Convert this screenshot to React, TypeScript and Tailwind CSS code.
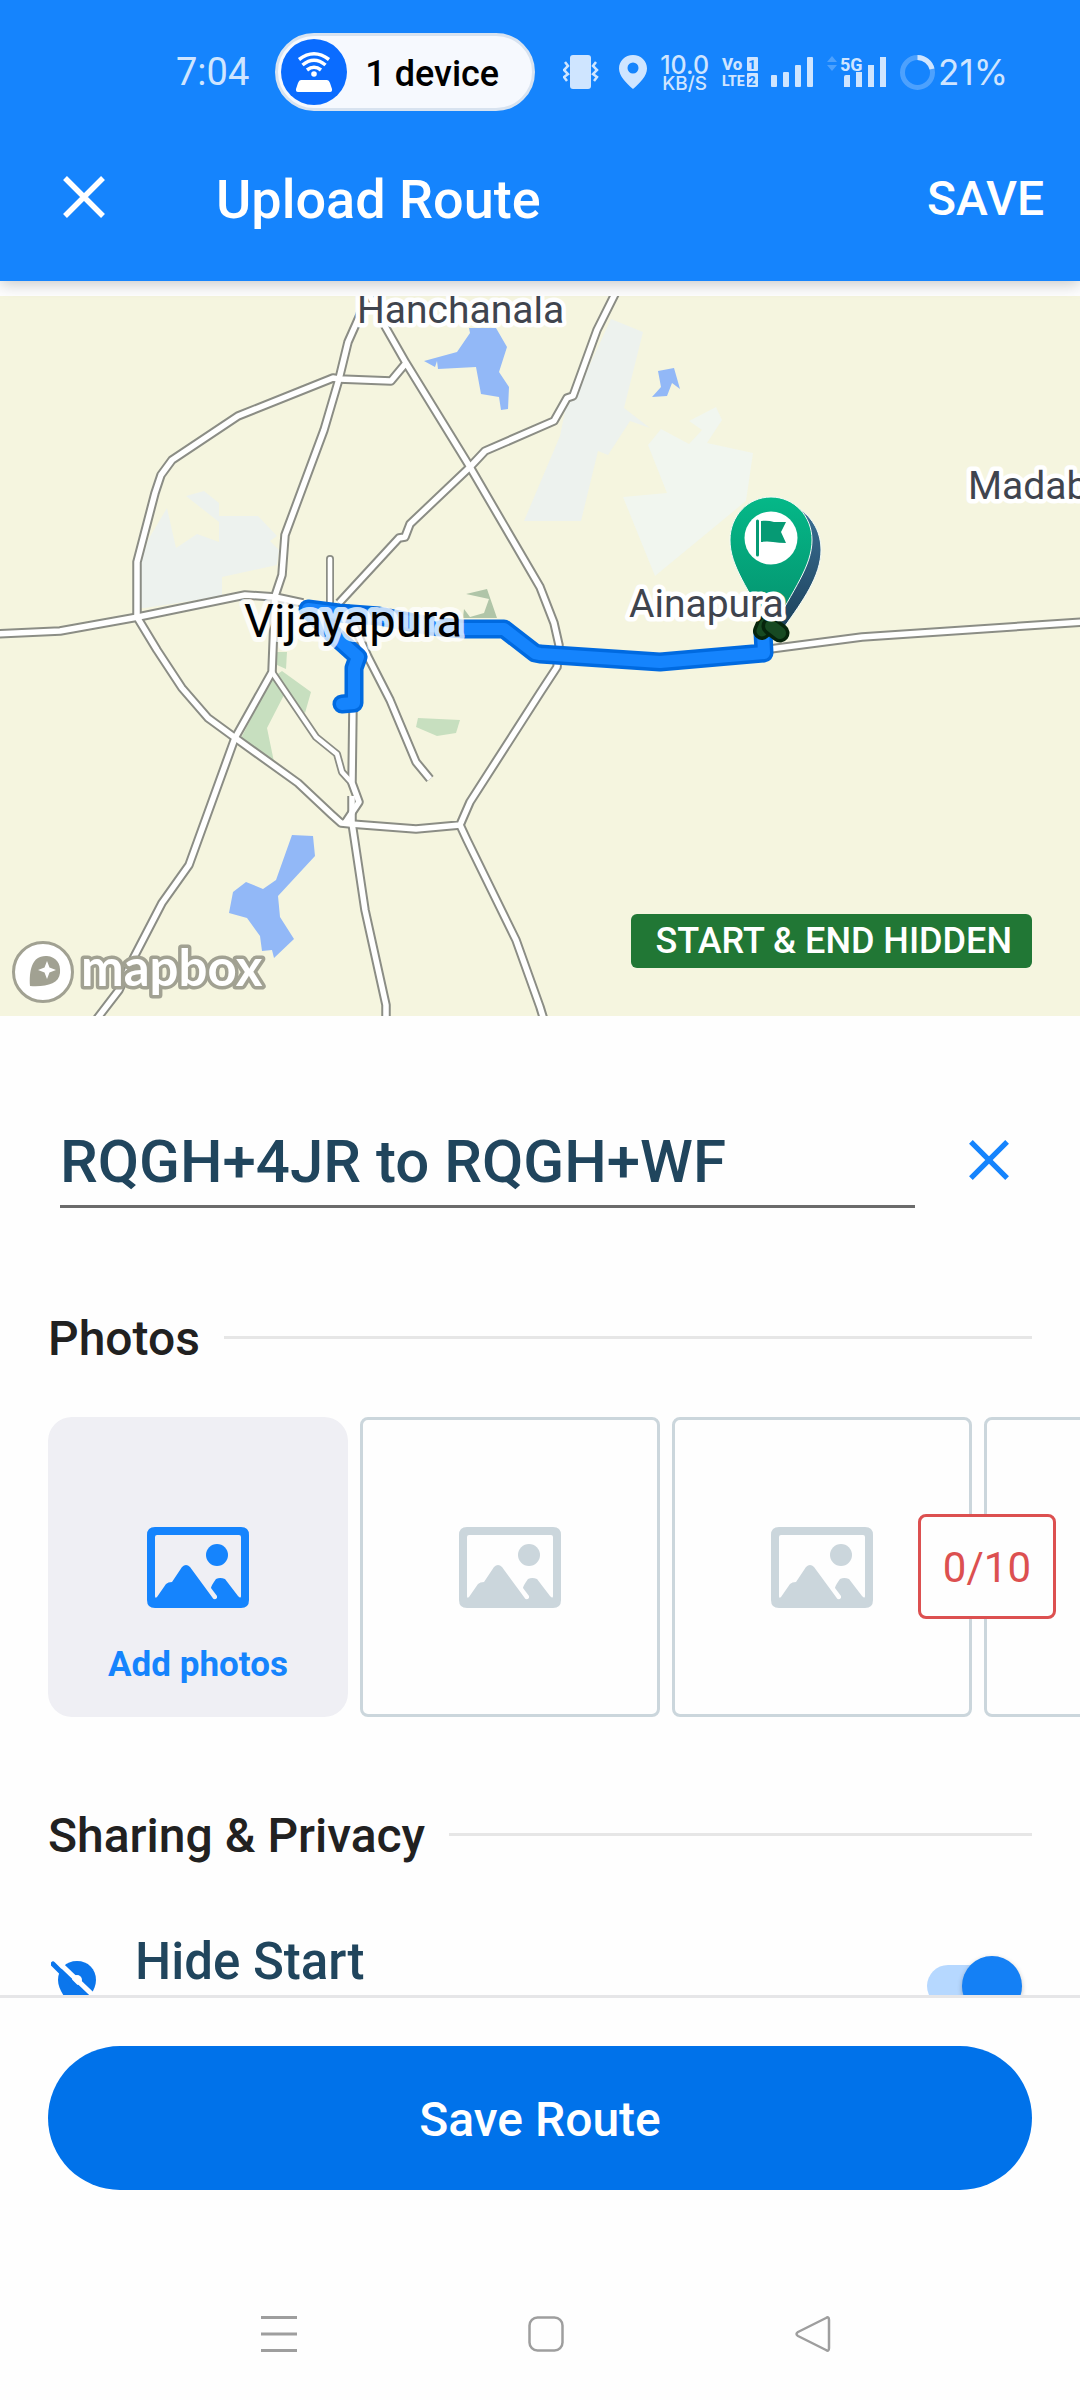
import React, { useState } from 'react';

const areas = [
  {
    color: '#edf2ee',
    points: [
      '139,271 148,244 167,212 176,252 197,238 219,246 219,226 186,200 204,195 219,207 219,220 258,220 277,240 270,245 279,254 277,269 222,281 222,300 145,312 139,312',
      '611,23 643,36 624,112 650,132 630,125 608,159 598,155 581,225 524,225 560,140 567,105 580,90',
    ],
  },
  {
    color: '#f1f6ef',
    points: [
      '716,111 722,124 707,147 753,157 746,205 655,280 623,201 667,197 648,149 661,133 689,148 702,134 689,125',
    ],
  },
  {
    color: '#92b8f7',
    points: [
      '658,75 674,72 680,93 672,87 667,100 652,101 661,91',
      '469,32 496,32 507,51 499,76 509,91 508,113 501,114 499,101 481,98 476,71 438,73 437,65 435,71 424,65 457,56 470,37',
      '292,539 313,540 315,560 278,600 280,621 294,643 274,662 272,654 262,655 260,640 247,622 229,617 233,596 246,586 263,593 276,584',
    ],
  },
  {
    color: '#b0c5a8',
    points: ['466,298 487,293 497,322 463,322 464,313 470,321 484,317 489,303'],
  },
  {
    color: '#c7dfbf',
    points: [
      '277,356 287,356 286,373 277,369',
      '282,375 311,396 305,417 284,399 267,432 274,466 241,442 272,382',
      '418,422 460,424 456,437 437,440 416,431',
    ],
  },
];

const minorRoads = [
  '330,263 330,306',
  '272,376 316,441 337,458 342,476 352,487',
];

const roads = [
  '406,67 391,85 339,83 333,82 238,120 172,164 161,179 155,197 137,266 137,321 157,354 182,392 208,422 234,441 298,487 331,518 341,527 351,528 416,533 460,529 470,506 540,397 557,371 559,349 554,327 540,291 470,171 406,67 386,32 368,-4',
  '366,-4 360,19 348,46 339,83 324,134 285,239 282,279 275,300 272,376 235,442 189,569 162,607 134,661 119,694 96,724',
  '-4,338 60,335 138,321 245,299 275,301 303,307',
  '616,-4 597,34 573,100 567,102 554,125 485,155 470,171 410,228 405,241 399,242 339,307',
  '770,353 862,341 1084,326',
  '353,410 352,487 359,506 345,527',
  '352,500 352,527 365,614 386,709 386,724',
  '345,310 368,361 390,404 416,466 430,483',
  '460,529 467,544 516,644 540,711 544,724',
];

const route =
  '342,408 354,407 354,372 358,361 339,344 308,313 339,317 379,320 430,330 463,333 504,333 535,357 540,358 660,366 764,357 763,336';

function RouteMap() {
  return (
    <svg viewBox="0 0 1080 720" className="block w-full h-auto" role="img" aria-label="Route map">
      <defs>
        <linearGradient id="pin" x1="0" y1="0" x2="0" y2="1">
          <stop offset="0" stopColor="#05b888" />
          <stop offset="1" stopColor="#048f6c" />
        </linearGradient>
        <linearGradient id="pinSide" x1="0" y1="0" x2="0" y2="1">
          <stop offset="0" stopColor="#3b6f94" />
          <stop offset="1" stopColor="#1d435d" />
        </linearGradient>
      </defs>
      <rect width="1080" height="720" fill="#f5f5df" />
      {areas.map((area) =>
        area.points.map((p) => <polygon key={p} points={p} fill={area.color} />)
      )}
      <g fill="none" strokeLinejoin="round">
        <g stroke="#8b8d85">
          {minorRoads.map((p) => <polyline key={p} points={p} strokeWidth="8" strokeLinecap="round" />)}
          {roads.map((p) => <polyline key={p} points={p} strokeWidth="9.500" />)}
        </g>
        <g stroke="#ffffff">
          {minorRoads.map((p) => <polyline key={p} points={p} strokeWidth="4.500" strokeLinecap="round" />)}
          {roads.map((p) => <polyline key={p} points={p} strokeWidth="5.500" />)}
        </g>
        <polyline points={route} stroke="#006ae0" strokeWidth="19" strokeLinecap="round" />
        <polyline points={route} stroke="#1584fd" strokeWidth="12" strokeLinecap="round" />
      </g>

      {/* destination pin */}
      <path d="M798 212C814 222 821 238 821 254C821 280 802 306 785 330L772 320Z" fill="url(#pinSide)" stroke="#f3fbf8" strokeWidth="1" />
      <path d="M771 201C794 201 812 220 812 244C812 270 794 292 771 336C748 292 730 270 730 244C730 220 748 201 771 201Z" fill="url(#pin)" stroke="#f3fbf8" strokeWidth="1" />
      <circle cx="771" cy="242" r="26.5" fill="#ffffff" />
      <path d="M757.5 225V259" stroke="#069a74" strokeWidth="3" strokeLinecap="round" />
      <path d="M761 225Q768 224 774 226Q780 226 786 226L781 236L786 247Q779 247 773 246Q767 245 761 246Z" fill="#069a74" />
      <g fill="none" strokeLinecap="round">
        <path d="M765 328L762 335" stroke="#06250c" strokeWidth="18" />
        <path d="M765 328L762 335" stroke="#174a22" strokeWidth="11" />
        <path d="M771 330L780 337" stroke="#06250c" strokeWidth="19" />
        <path d="M771 330L780 337" stroke="#174a22" strokeWidth="12" />
      </g>

      <g fill="#3f444e" stroke="#ffffff" strokeWidth="9" strokeLinejoin="round" paintOrder="stroke" fontSize="39">
        <text x="357" y="27">Hanchanala</text>
        <text x="629" y="321">Ainapura</text>
        <text x="968" y="203">Madab</text>
      </g>
      <text x="244" y="341" fontSize="47" fill="#000000" stroke="#ffffff" strokeOpacity="0.75" strokeWidth="10" strokeLinejoin="round" paintOrder="stroke">
        Vijayapura
      </text>

      {/* mapbox mark */}
      <circle cx="43" cy="676" r="29.5" fill="#ffffff" stroke="#a1a192" strokeWidth="3" />
      <path d="M30 690C29 674 32 659 47 660C56 661 61 667 60 677C59 688 46 691 30 690Z" fill="#a1a192" />
      <path d="M47 665L49.500 671.500L56 674L49.500 676.500L47 683L44.500 676.500L38 674L44.500 671.500Z" fill="#ffffff" />
      <text x="81" y="690" fontSize="51" fontWeight="700" fontFamily="Lato, sans-serif" fill="#ffffff" stroke="#a1a192" strokeWidth="7" strokeLinejoin="round" paintOrder="stroke">
        mapbox
      </text>
    </svg>
  );
}

function SignalBars() {
  return (
    <g>
      <rect x="0" y="18" width="6" height="12" rx="1" />
      <rect x="12" y="15" width="6" height="15" rx="1" />
      <rect x="24" y="8" width="6" height="22" rx="1" />
      <rect x="36" y="0" width="6" height="30" rx="1" />
    </g>
  );
}

function StatusBar() {
  return (
    <div className="flex items-center justify-between pt-[33px] pb-[2px] pl-[176px] pr-[72px] text-[#cfe5ff]">
      <div className="flex items-center gap-[26px]">
        <span className="text-[38px] leading-none">7:04</span>
        <div className="flex items-center gap-[18px] h-[78px] pl-[3px] pr-[33px] rounded-full border-[3px] border-[#d8e3f0] bg-[#f6f9fe]">
          <svg width="66" height="66" viewBox="0 0 66 66">
            <circle cx="33" cy="33" r="33" fill="#0a6cff" />
            <g fill="none" stroke="#ffffff" strokeWidth="3.500">
              <path d="M18 20.500Q33 9 48 20.500" />
              <path d="M21.500 26Q33 16.500 44.500 26" />
              <path d="M26 31Q33 25.500 40 31" />
            </g>
            <circle cx="33" cy="35" r="2.800" fill="#ffffff" />
            <path d="M20 41H46Q48 41 49 44L51 50Q51.500 53 49 53H17Q14.500 53 15 50L17 44Q18 41 20 41Z" fill="#ffffff" />
          </svg>
          <span className="pt-1 text-4xl leading-none font-medium text-black">1 device</span>
        </div>
      </div>

      <div className="flex items-center gap-[13px]">
        <svg width="43" height="34" viewBox="0 0 43 34" fill="currentColor">
          <rect x="7" y="0" width="21" height="34" rx="3" />
          <path d="M2 7L5 11L1 15L5 19L1 22L4 26M33 7L30 11L34 15L30 19L34 22L31 26" fill="none" stroke="currentColor" strokeWidth="2.500" />
        </svg>
        <svg width="28" height="34" viewBox="0 0 28 34" fill="currentColor">
          <path fillRule="evenodd" d="M14 0C22 0 28 6 28 13.500C28 21 21 28 14 34C7 28 0 21 0 13.500C0 6 6 0 14 0ZM14 7.500A5.500 5.500 0 1 0 14 18.500A5.500 5.500 0 1 0 14 7.500Z" />
        </svg>
        <div className="flex flex-col items-center pt-1 font-[Inter] font-medium">
          <span className="text-[25px] leading-[20px]">10.0</span>
          <span className="text-[19px] leading-[18px]">KB/S</span>
        </div>
        <svg width="36" height="30" viewBox="0 0 36 30" className="overflow-visible" fill="currentColor" fontWeight="800">
          <text x="0" y="13" fontSize="17">Vo</text>
          <text x="0" y="29" fontSize="14">LTE</text>
          <rect x="25" y="0" width="11" height="14" rx="1" />
          <rect x="25" y="16" width="11" height="14" rx="1" />
          <g fill="#1584fd" fontSize="13" textAnchor="middle">
            <text x="30" y="12">1</text>
            <text x="30" y="28">2</text>
          </g>
        </svg>
        <svg width="43" height="30" viewBox="0 0 43 30" fill="currentColor">
          <SignalBars />
        </svg>
        <svg width="60" height="34" viewBox="0 0 60 34" className="overflow-visible" fill="currentColor">
          <path d="M0 7L5 1L10 7ZM0 10L5 16L10 10Z" opacity="0.3" />
          <text x="13" y="16" fontSize="18" fontWeight="700">5G</text>
          <path d="M17 22Q17 20 19 20H23V32H17ZM29 17H35V32H29ZM41 10H47V32H41ZM53 2H59V32H53Z" />
        </svg>
        <div className="flex items-center gap-[3px]">
          <svg width="35" height="35" viewBox="0 0 35 35" fill="none" stroke="currentColor" strokeWidth="5">
            <circle cx="17.500" cy="17.500" r="15" opacity="0.3" />
            <path d="M17.500 2.500A15 15 0 0 1 32 14" />
          </svg>
          <span className="font-[Inter] text-[35px] leading-none">21%</span>
        </div>
      </div>
    </div>
  );
}

function CloseIcon({ size }: { size: number }) {
  return (
    <svg width={size} height={size} viewBox="0 0 42 42" fill="none" stroke="currentColor" strokeWidth="5.500">
      <path d="M2 2L40 40M40 2L2 40" />
    </svg>
  );
}

function PhotoIcon() {
  return (
    <svg width="102" height="81" viewBox="0 0 102 81" fill="currentColor">
      <path
        fillRule="evenodd"
        d="M8 0H94Q102 0 102 8V73Q102 81 94 81H8Q0 81 0 73V8Q0 0 8 0ZM10 8Q8 8 8 10V69Q8 72 10 70L19 57Q21 55 25 55L35 40Q39 36 43 40L65 70Q67 74 70 71L70 69L64 61Q64 59 69 52Q73 50 78 52L91 69Q94 72 94 69V10Q94 8 92 8Z"
      />
      <circle cx="70" cy="28" r="11" />
    </svg>
  );
}

function SectionHeading({ children }: { children: React.ReactNode }) {
  return (
    <div className="flex items-center gap-6 h-[60px] px-12">
      <h2 className="pt-1 text-5xl leading-[56px] font-medium text-[#212121]">{children}</h2>
      <div className="flex-1 h-[3px] bg-[#e6e6e6]" />
    </div>
  );
}

export default function App() {
  const [name, setName] = useState('RQGH+4JR to RQGH+WF');
  const [hideStart, setHideStart] = useState(true);

  return (
    <div className="flex flex-col h-screen bg-[#fefefe] font-[Roboto,sans-serif]">
      <header className="relative z-10 bg-[#1584fd] text-white shadow-[0_3px_15px_rgba(0,0,0,0.22)]">
        <StatusBar />
        <div className="flex items-center h-[168px] pl-[63px] pr-9">
          <button aria-label="Close">
            <CloseIcon size={42} />
          </button>
          <h1 className="flex-1 pt-1.5 pl-[111px] text-[54px] leading-[64px] font-medium">Upload Route</h1>
          <button className="pt-1 text-5xl font-medium">SAVE</button>
        </div>
      </header>

      <main className="flex-1 min-h-0 overflow-hidden pt-[15px]">
        <div className="relative">
          <RouteMap />
          <span className="absolute right-12 bottom-12 pl-[25px] pr-5 rounded-md bg-[#217735] text-4xl leading-[54px] font-medium text-white">
            START &amp; END HIDDEN
          </span>
        </div>

        <div className="flex mt-[104px] mb-[99px] pl-[60px] pr-[43px]">
          <input
            type="text"
            aria-label="Route name"
            value={name}
            onChange={(e) => setName(e.target.value)}
            className="flex-1 min-w-0 h-[88px] pb-[3px] border-b-[3px] border-[#6b6b6b] text-6xl font-medium text-[#20455d] outline-none"
          />
          <button aria-label="Clear name" className="flex items-center justify-center w-24 h-20 ml-[26px] text-[#1584fd]">
            <CloseIcon size={40} />
          </button>
        </div>

        <SectionHeading>Photos</SectionHeading>
        <div className="relative mt-[50px] mb-[87px]">
          <div className="flex gap-3 pl-12 overflow-hidden">
            <button className="relative flex items-center justify-center shrink-0 size-[300px] rounded-3xl bg-[#efeff4] text-[#1584fd]">
              <PhotoIcon />
              <span className="absolute inset-x-0 bottom-7 text-[35px] leading-[48px] font-bold">Add photos</span>
            </button>
            {[0, 1, 2].map((slot) => (
              <div
                key={slot}
                className="flex items-center justify-center shrink-0 size-[300px] rounded-lg border-[3px] border-[#cbd6dc] text-[#cbd6dc]"
              >
                <PhotoIcon />
              </div>
            ))}
          </div>
          <span className="absolute right-6 top-[97px] pt-[3px] px-[22px] rounded-lg border-[3px] border-[#dc5050] bg-[#fefefe] text-[42px] leading-[96px] text-[#dc5050]">
            0/10
          </span>
        </div>

        <SectionHeading>Sharing &amp; Privacy</SectionHeading>
        <div className="flex items-center h-[108px] mt-[68px] pl-[51px] pr-[58px]">
          <svg width="46" height="50" viewBox="0 0 46 50">
            <path d="M26 0C37 0 45 8 45 19C45 30 35 41 26 50C17 41 7 30 7 19C7 8 15 0 26 0Z" fill="#0b76ec" />
            <circle cx="26" cy="19" r="5" fill="#ffffff" />
            <path d="M6 0L46 38" stroke="#fefefe" strokeWidth="5" />
            <path d="M2 3L40 41" stroke="#0b76ec" strokeWidth="5" strokeLinecap="round" />
          </svg>
          <label htmlFor="hide-start" className="flex-1 self-start pl-[38px] text-[51px] leading-[60px] font-medium text-[#20455d]">
            Hide Start
          </label>
          <input
            id="hide-start"
            type="checkbox"
            role="switch"
            checked={hideStart}
            onChange={(e) => setHideStart(e.target.checked)}
            className="relative w-[95px] h-[60px] appearance-none before:absolute before:left-0 before:top-[9px] before:w-[82px] before:h-[42px] before:rounded-full before:bg-[#b6d8ff] after:absolute after:left-0 checked:after:left-[35px] after:top-0 after:size-[60px] after:rounded-full after:bg-[#1480f5] after:shadow-[0_2px_5px_rgba(0,0,0,0.25)]"
          />
        </div>
      </main>

      <footer className="border-t-[3px] border-[#e6e6e8] pt-12 px-12 pb-[78px]">
        <button className="w-full h-36 pt-1 rounded-full bg-[#0072ea] text-5xl font-medium text-white">Save Route</button>
      </footer>

      <nav className="flex items-center justify-center gap-[231px] h-[132px] pl-[11px] text-[#9e9e9e]">
        <button aria-label="Recent apps">
          <svg width="36" height="36" viewBox="0 0 36 36" stroke="currentColor" strokeWidth="3">
            <path d="M0 1.500H36M0 18H36M0 34.500H36" />
          </svg>
        </button>
        <button aria-label="Home">
          <svg width="36" height="36" viewBox="0 0 36 36" fill="none" stroke="currentColor" strokeWidth="2.500">
            <rect x="1.500" y="1.500" width="33" height="33" rx="8" />
          </svg>
        </button>
        <button aria-label="Back">
          <svg width="36" height="36" viewBox="0 0 36 36" fill="none" stroke="currentColor" strokeWidth="2.500" strokeLinejoin="round">
            <path d="M31 2Q34 0 34 4V32Q34 36 31 34L3 20Q0 18 3 16Z" />
          </svg>
        </button>
      </nav>
    </div>
  );
}
